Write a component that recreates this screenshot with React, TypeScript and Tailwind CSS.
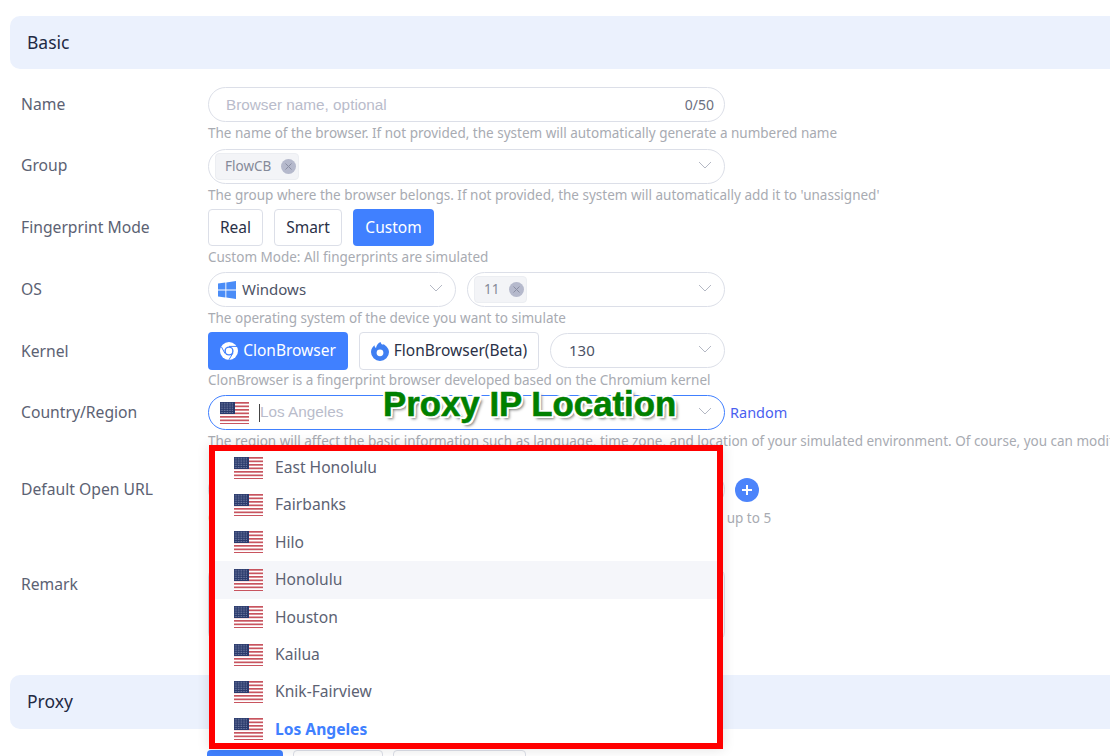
import React from "react";

const CITIES = ["East Honolulu", "Fairbanks", "Hilo", "Honolulu", "Houston", "Kailua", "Knik-Fairview", "Los Angeles"];

function Chevron() {
  return (
    <svg width="14" height="8" viewBox="0 0 14 8" fill="none" stroke="#b4b8c4" strokeWidth="1" className="shrink-0 -mt-[3px]">
      <path d="M1 1l6 6 6-6" />
    </svg>
  );
}

function UsFlag() {
  const stripes = [0, 1, 2, 3, 4, 5, 6];
  const dots = [];
  for (let r = 0; r < 6; r++) {
    for (let c = 0; c < 8; c++) {
      dots.push(<rect key={`${r}-${c}`} x={0.8 + c * 1.6} y={0.8 + r * 1.85} width="0.8" height="0.8" fill="#8e97b8" />);
    }
  }
  return (
    <svg width="29" height="22" viewBox="0 0 29 22" className="shrink-0">
      <rect width="29" height="22" fill="#fff" />
      {stripes.map((i) => (
        <rect key={i} y={i * 3.5} width="29" height="1.7" fill="#c8545f" />
      ))}
      <rect width="15" height="12" fill="#2a3a6c" />
      {dots}
    </svg>
  );
}

function Chip({ text }: { text: string }) {
  return (
    <span className="flex items-center h-[27px] pl-[9px] pr-[2px] gap-[10px] rounded-[4px] bg-[#f3f4f7] border border-[#eceef2] text-[13.5px] text-[#858a99]">
      {text}
      <span className="w-[15px] h-[15px] rounded-full bg-[#b5b9cc] flex items-center justify-center">
        <svg width="9" height="9" viewBox="0 0 9 9" stroke="#8a8ea3" strokeWidth="1" fill="none">
          <path d="M1.5 1.5l6 6M7.5 1.5l-6 6" />
        </svg>
      </span>
    </span>
  );
}

function Row({ label, hint, className, hintClass, labelClass, children }: { label: string; hint?: string; className?: string; hintClass?: string; labelClass?: string; children: React.ReactNode }) {
  return (
    <div className={`flex ${className ?? ""}`}>
      <div className={`w-[208px] shrink-0 pl-[21px] pt-[1px] text-[15.7px] text-[#5c6273] self-start flex items-center ${labelClass ?? "h-[35px]"}`}>{label}</div>
      <div>
        <div className="flex items-center">{children}</div>
        {hint && <div className={`text-[13.5px] leading-[16px] text-[#a8abb2] whitespace-nowrap ${hintClass ?? "mt-[3px]"}`}>{hint}</div>}
      </div>
    </div>
  );
}

function Pill({ className, children }: { className: string; children: React.ReactNode }) {
  return <div className={`h-[35px] rounded-full border border-[#dcdfe8] bg-white flex items-center ${className}`}>{children}</div>;
}

function ModeButton({ active, className, children }: { active?: boolean; className: string; children: React.ReactNode }) {
  return (
    <div
      className={`flex items-center justify-center rounded-[4px] text-[15.5px] ${className} ${
        active ? "bg-[#4080ff] text-white" : "bg-white border border-[#dcdfe8] text-[#2a3147]"
      }`}
    >
      {children}
    </div>
  );
}

export default function App() {
  return (
    <div className="relative w-[1110px] h-[756px] overflow-hidden bg-white font-['Noto_Sans',sans-serif]">
      <div className="pt-[16px]">
        <div className="ml-[10px] w-[1300px] h-[53px] rounded-[10px] bg-[#ebf1fd] flex items-center pl-[17px] text-[17.5px] text-[#1f2a44]">Basic</div>

        <Row label="Name" hint="The name of the browser. If not provided, the system will automatically generate a numbered name" className="mt-[18px]">
          <Pill className="w-[517px] pl-[17px] pr-[10px] justify-between">
            <span className="pt-[1px] font-['Liberation_Sans',sans-serif] text-[15.3px] text-[#b9bccb]">Browser name, optional</span>
            <span className="text-[14px] text-[#6c7080]">0/50</span>
          </Pill>
        </Row>

        <Row label="Group" hint="The group where the browser belongs. If not provided, the system will automatically add it to 'unassigned'" className="mt-[8px]" labelClass="h-[33px]">
          <Pill className="w-[517px] pl-[6px] pr-[12px] justify-between">
            <Chip text="FlowCB" />
            <Chevron />
          </Pill>
        </Row>

        <Row label="Fingerprint Mode" hint="Custom Mode: All fingerprints are simulated" className="mt-[6px]" labelClass="h-[37px]">
          <div className="flex gap-[11px] h-[37px]">
            <ModeButton className="w-[55px]">Real</ModeButton>
            <ModeButton className="w-[68px]">Smart</ModeButton>
            <ModeButton active className="w-[81px]">Custom</ModeButton>
          </div>
        </Row>

        <Row label="OS" hint="The operating system of the device you want to simulate" className="mt-[7px]">
          <div className="flex gap-[11px]">
            <Pill className="w-[248px] pl-[9px] pr-[12px] justify-between">
              <span className="flex items-center gap-[6px] text-[15px] text-[#4d5366]">
                <svg width="18" height="18" viewBox="0 0 18 18" fill="#4a8cf7">
                  <path d="M0 2.6L7.4 1.5v7H0zM8.3 1.4L18 0v8.5H8.3zM0 9.4h7.4v7.1L0 15.4zM8.3 9.4H18V18l-9.7-1.4z" />
                </svg>
                Windows
              </span>
              <Chevron />
            </Pill>
            <Pill className="w-[258px] pl-[6px] pr-[12px] justify-between">
              <Chip text="11" />
              <Chevron />
            </Pill>
          </div>
        </Row>

        <Row label="Kernel" hint="ClonBrowser is a fingerprint browser developed based on the Chromium kernel" className="mt-[6px]" hintClass="mt-[2px]" labelClass="h-[38px]">
          <div className="flex gap-[11px] h-[38px] items-start">
            <ModeButton active className="w-[140px] h-[38px] gap-[5px]">
              <svg width="18" height="18" viewBox="0 0 18 18" fill="none">
                <circle cx="9" cy="9" r="9" fill="#fff" />
                <circle cx="9" cy="9" r="4.6" fill="#4080ff" />
                <circle cx="9" cy="9" r="3.2" fill="#fff" />
                <path d="M9 4.4h8M5 11.5L1.5 5M13 11L8.8 18" stroke="#4080ff" strokeWidth="1" />
              </svg>
              ClonBrowser
            </ModeButton>
            <ModeButton className="w-[180px] h-[38px] gap-[5px]">
              <svg width="18" height="19" viewBox="0 0 18 19">
                <path d="M9.5 0c.6 2.2 2 3.2 3.4 2.2.8 1 5.1 3.4 5.1 7.8a9 9 0 11-18 0c0-3.200 1.800-5.300 3.500-6.700.1 1.300.6 2.200 1.500 2.700C5.300 3.600 7 1.200 9.500 0z" fill="#3f7ff2" />
                <circle cx="9" cy="10.800" r="3.400" fill="#fff" />
              </svg>
              FlonBrowser(Beta)
            </ModeButton>
            <Pill className="w-[175px] mt-[1px] pl-[18px] pr-[12px] justify-between text-[15px] text-[#4d5366]">
              130
              <Chevron />
            </Pill>
          </div>
        </Row>

        <Row
          label="Country/Region"
          hint="The region will affect the basic information such as language, time zone, and location of your simulated environment. Of course, you can modify them later"
          className="mt-[7px]"
        >
          <div className="w-[517px] h-[35px] rounded-full border border-[#4080ff] bg-white flex items-center justify-between pl-[11px] pr-[12px]">
            <span className="flex items-center gap-[10px]">
              <UsFlag />
              <span className="border-l border-[#444] h-[18px] flex items-center font-['Liberation_Sans',sans-serif] text-[15.3px] text-[#b9bccb]">Los Angeles</span>
            </span>
            <Chevron />
          </div>
          <span className="ml-[5px] text-[14.5px] text-[#4a5ff0]">Random</span>
        </Row>

        <Row label="Default Open URL" hint="Open the specified URLs automatically when the browser starts, you can only add up to 5" className="mt-[23px]">
          <Pill className="w-[517px]">
            <span />
          </Pill>
          <span className="ml-[10px] w-[24px] h-[24px] rounded-full bg-[#4c84fb] flex items-center justify-center">
            <svg width="12" height="12" viewBox="0 0 12 12" stroke="#fff" strokeWidth="2">
              <path d="M6 1v10M1 6h10" />
            </svg>
          </span>
        </Row>

        <Row label="Remark" className="mt-[41px]">
          <div className="w-[517px] h-[75px] rounded-[10px] border border-[#dcdfe8]" />
        </Row>

        <div className="mt-[33px] ml-[10px] w-[1300px] h-[54px] pb-[1px] rounded-[10px] bg-[#ebf1fd] flex items-center pl-[17px] text-[17.5px] text-[#1f2a44]">Proxy</div>

        <div className="mt-[21px] ml-[207px] flex gap-[10px] h-[37px]">
          <ModeButton active className="w-[76px]">Custom</ModeButton>
          <ModeButton className="w-[90px]">Saved</ModeButton>
          <ModeButton className="w-[133px]">Extract</ModeButton>
        </div>
      </div>

      {/* dropdown, outlined in red by the screenshot's author */}
      <div className="absolute left-[209px] top-[445px] w-[514px] h-[304px] bg-white border-[6px] border-[#ff0000] shadow-[0_0_12px_rgba(0,0,0,0.12)] overflow-hidden">
        <div className="-mt-[2px]">
          {CITIES.map((city) => (
            <div
              key={city}
              className={`h-[37.4px] flex items-center pl-[19px] gap-[12px] text-[15.6px] ${
                city === "Honolulu" ? "bg-[#f5f6fa]" : ""
              } ${city === "Los Angeles" ? "text-[#4080ff] font-bold" : "text-[#5c6273]"}`}
            >
              <UsFlag />
              {city}
            </div>
          ))}
        </div>
      </div>

      <div className="absolute left-[383px] top-[382px] font-['Liberation_Sans',sans-serif] font-bold text-[34.8px] leading-[44px] text-[#008000] whitespace-nowrap [-webkit-text-stroke:0.6px_#008000] [text-shadow:-2px_0_0_#fff,2px_0_0_#fff,0_-2px_0_#fff,0_2px_0_#fff,-2px_-2px_0_#fff,2px_-2px_0_#fff,-2px_2px_0_#fff,2px_2px_0_#fff,3px_3px_3px_#777]">
        Proxy IP Location
      </div>
    </div>
  );
}
